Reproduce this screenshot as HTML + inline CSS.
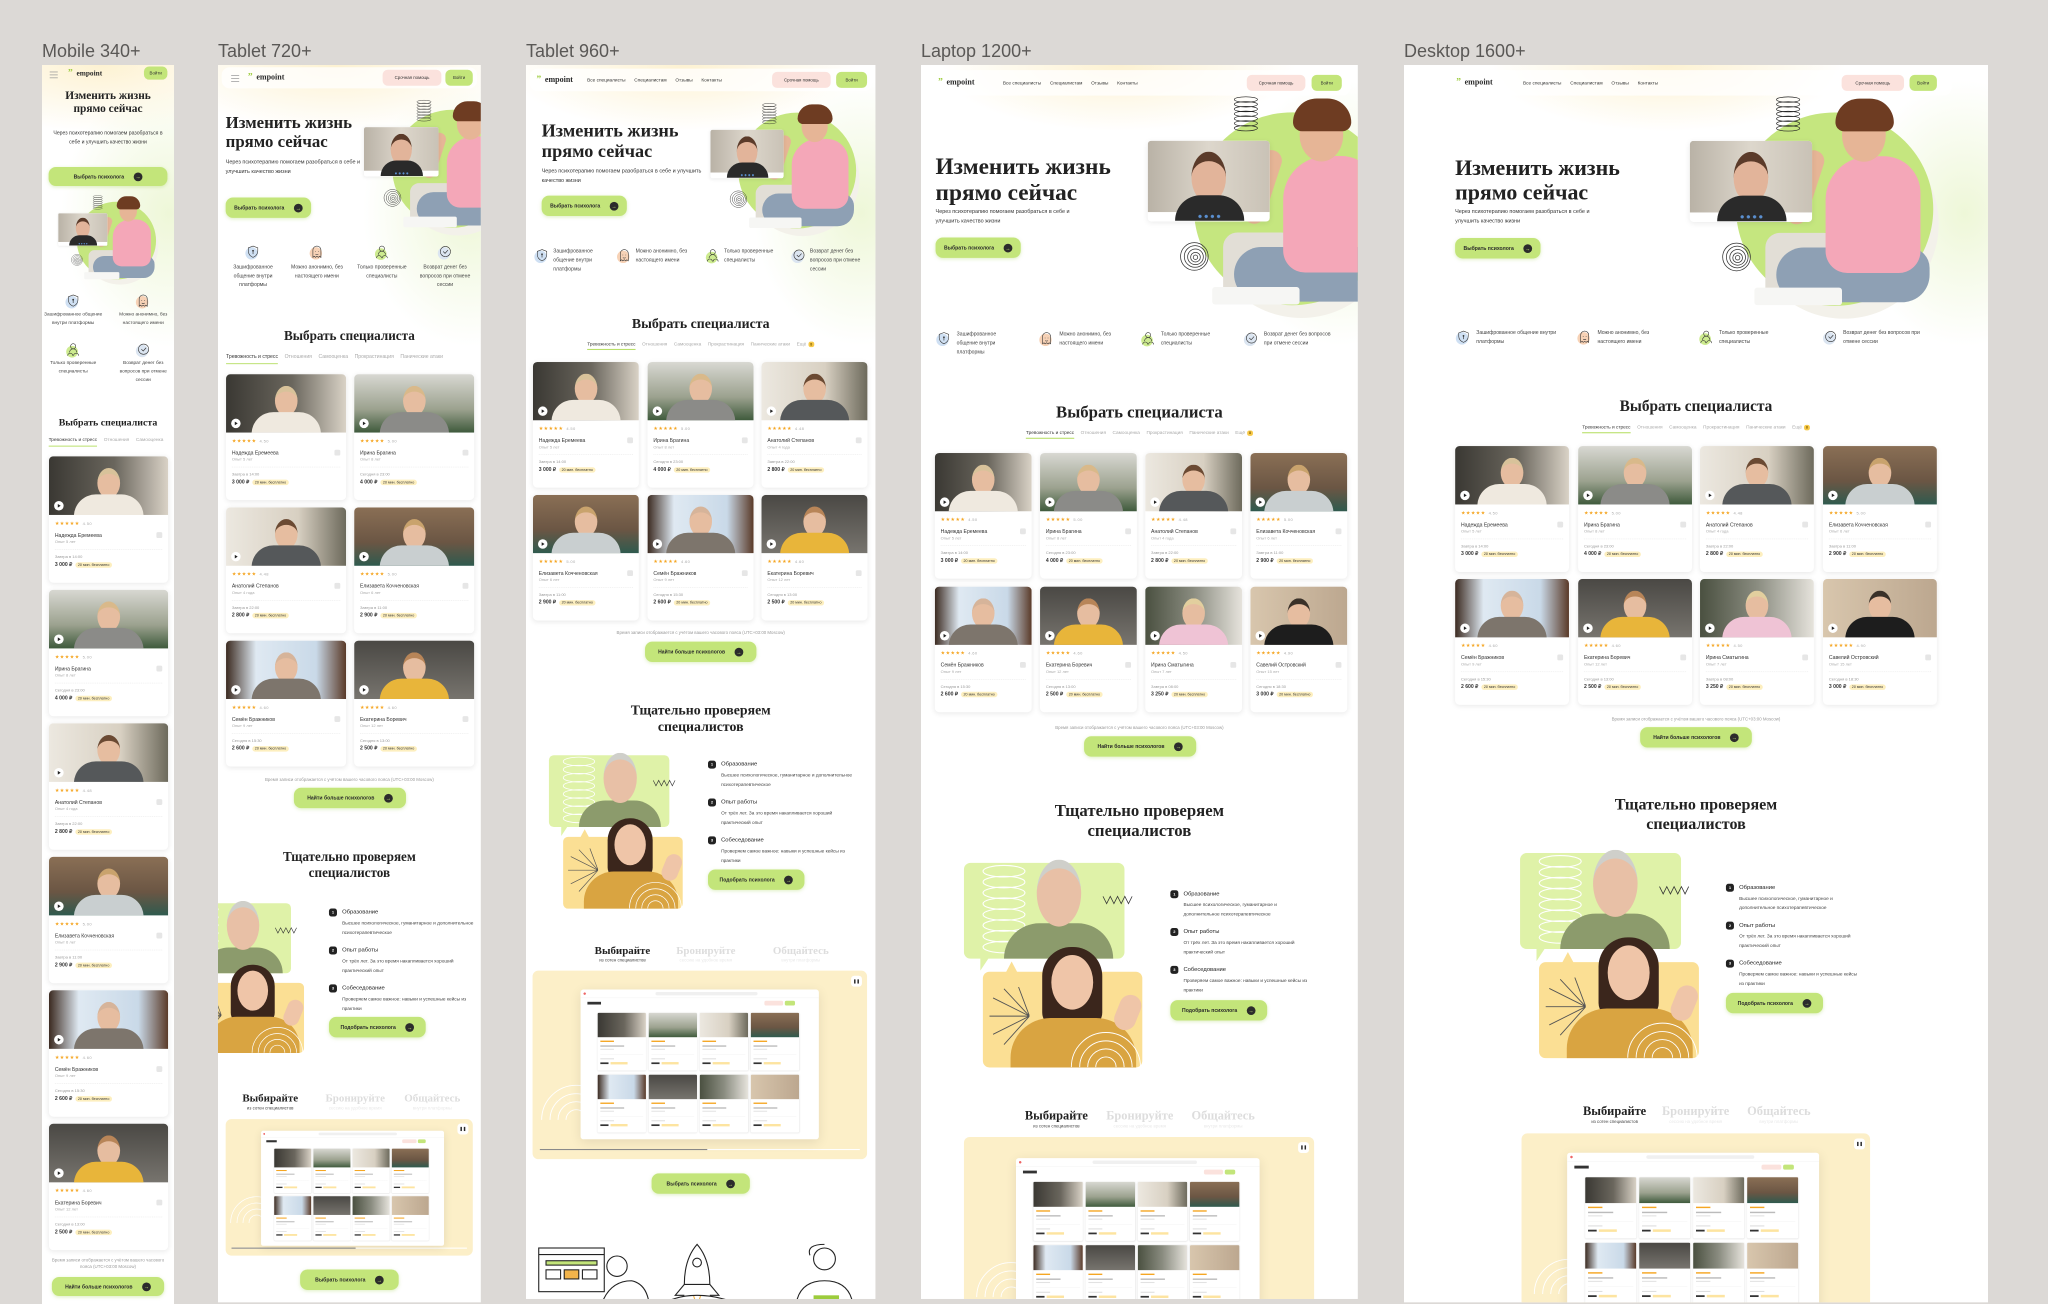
<!DOCTYPE html>
<html style="height:1304px;overflow:hidden"><head><meta charset="utf-8"><style>
html,body{margin:0;width:2048px;height:1304px;overflow:hidden}
body{background:#dcd9d6;font-family:"Liberation Sans",sans-serif}
#w{position:absolute;left:0;top:0;width:2048px;height:1304px;overflow:hidden;contain:paint;background:#dcd9d6}
.lbl{position:absolute;top:41px;font-size:18px;color:#5a5856}
.ab{position:absolute;top:65px;height:3390px;background:radial-gradient(ellipse 700px 260px at 45% 0,#fdf2d2,rgba(255,255,255,0) 70%),radial-gradient(ellipse 420px 520px at 96% 12%,#eef7d8,rgba(255,255,255,0) 70%),#fff;transform-origin:0 0;overflow:hidden;color:#2a2a2a}
.ab>*,.art>*,.il>*,.mb>*,.box>*{position:absolute}
.nav{background:rgba(255,255,255,.75);border-radius:22px}
.logo{font-family:"Liberation Serif",serif;font-weight:bold;font-size:22px;white-space:nowrap}
.logo b{color:#9ccc3c;font-size:26px;margin-right:10px}
.lk{font-size:13px;color:#333;white-space:nowrap}.lk span{margin-left:24px}
.bp,.bgn{height:44px;line-height:44px;text-align:center;font-size:12px;border-radius:14px;color:#333}
.bp{background:#fbe2dd}.bgn{background:#c3e57a}
.hb{width:22px;height:14px;border-top:2px solid #999;border-bottom:2px solid #999}.hb:after{content:"";position:absolute;left:0;right:0;top:6px;border-top:2px solid #999}
.h1{font-family:"Liberation Serif",serif;font-weight:bold;line-height:1.12;color:#222;white-space:nowrap}
.sub{font-size:15px;line-height:1.75;color:#333}
.gb{height:56px;line-height:56px;border-radius:20px;background:#c3e57a;font-size:14px;font-weight:bold;color:#2a2a2a;text-align:center;box-shadow:0 3px 10px rgba(160,210,80,.35);white-space:nowrap}
.gb i{display:inline-block;width:24px;height:24px;line-height:24px;border-radius:50%;background:#2c2c2c;color:#c3e57a;font-style:normal;font-size:14px;margin-left:26px;vertical-align:middle}
.ft{font-size:14px;line-height:1.75;color:#444}
.ic{width:46px;height:46px}
.st2{font-family:"Liberation Serif",serif;font-weight:bold;text-align:center;left:0;right:0;color:#222;line-height:1.2}
.tabs{display:flex;gap:18px;font-size:13px;color:#aaa;white-space:nowrap;justify-content:center;left:0;right:0}
.tabs span:first-child{color:#333;border-bottom:3px solid #b9e06a;padding-bottom:7px}
.tabs b{display:inline-block;background:#f7c948;color:#7a5a00;border-radius:6px;font-size:10px;padding:2px 5px;margin-left:6px}
.cd{background:#fff;border-radius:12px;box-shadow:0 3px 14px rgba(0,0,0,.09);overflow:hidden;height:345px}
.im{position:relative;height:160px;overflow:hidden;background:var(--bg)}
.im .h{position:absolute;left:50%;top:20%;width:62px;height:66px;margin-left:-31px;border-radius:50%;background:#e6bda0;border-top:16px solid var(--hr)}
.im .b{position:absolute;left:50%;bottom:-22px;width:190px;margin-left:-95px;height:78px;border-radius:60px 60px 0 0;background:var(--sh)}
.im s{position:absolute;left:14px;bottom:12px;width:26px;height:26px;border-radius:50%;background:#fff}
.im s:after{content:"";position:absolute;left:10px;top:8px;border-left:8px solid #222;border-top:5px solid transparent;border-bottom:5px solid transparent}
.tx{padding:14px 16px;font-size:13px;color:#333}
.tx p{margin:0}
.st{color:#f5a623;font-size:14px;letter-spacing:1px}.st em{color:#aaa;font-style:normal;font-size:11px;margin-left:8px}
.nm{margin-top:16px!important;font-size:14px;white-space:nowrap}.nm u{float:right;width:16px;height:16px;background:#e6e6e6;border-radius:4px}
.ex{font-size:11px;color:#aaa;margin-top:5px!important;padding-bottom:14px;border-bottom:1px dashed #ddd}
.tm{margin-top:14px!important;font-size:11px;color:#999}
.pr{margin-top:5px!important;font-weight:bold;font-size:14px;white-space:nowrap}.pr span{font-weight:normal;font-size:10px;background:#fdefbf;border-radius:8px;padding:2px 7px;margin-left:8px}
.q1{--bg:linear-gradient(90deg,#3a3833,#6a665d 55%,#d9d2c6);--sh:#efe9df;--hr:#d8c29a}
.q2{--bg:linear-gradient(#d8d8d2,#9ca28f 60%,#3f5a3c);--sh:#8b8b88;--hr:#d9b98a}
.q3{--bg:linear-gradient(90deg,#ece8e0,#d8d0c2 60%,#6d6a5c);--sh:#55585a;--hr:#6b4a33}
.q4{--bg:linear-gradient(#8a6f55,#6b5644 60%,#2f5a4e);--sh:#c9cfd0;--hr:#c9a36d}
.q5{--bg:linear-gradient(90deg,#3b2a20,#dfe9f2 25%,#c9d9e8 75%,#5a3a28);--sh:#7d756c;--hr:#d6b49a}
.q6{--bg:linear-gradient(#4a4844,#77746e);--sh:#e8b53a;--hr:#b88558}
.q7{--bg:linear-gradient(90deg,#4a5040,#8a8c80 50%,#e6e3dc);--sh:#efc3d5;--hr:#e2cf9e}
.q8{--bg:linear-gradient(90deg,#d8c6ad,#bca78f);--sh:#1d1d1d;--hr:#3a3129}
.note{left:0;right:0;text-align:center;font-size:12px;color:#999}
.stp{font-size:13px;color:#444;line-height:26px}
.stp p{margin:0 0 22px;padding-left:36px;position:relative}
.stp strong{font-size:16px;font-weight:normal;color:#222;display:block;margin-bottom:4px}
.stp .n{position:absolute;left:0;top:3px;width:22px;height:22px;line-height:22px;border-radius:7px;background:#222;color:#fff;font-size:11px;text-align:center}
.th{text-align:center;white-space:nowrap}
.th b{display:block;font-family:"Liberation Serif",serif;font-size:34px;color:#222}
.th span{font-size:12px;color:#444}
.th.g b{color:#ddd}.th.g span{color:#e8e8e8}
.box{background:#fcefc8;border-radius:16px;overflow:hidden}
.pz{width:30px;height:30px;border-radius:9px;background:#fff;font-size:11px;text-align:center;line-height:30px;font-weight:bold}
.mb{width:700px;height:440px;background:#fff;border-radius:8px;box-shadow:0 8px 34px rgba(0,0,0,.09);transform-origin:0 0;overflow:hidden}
.mc{width:142px;height:170px;background:#fff;box-shadow:0 1px 5px rgba(0,0,0,.12);border-radius:4px;overflow:hidden}
.mc i{display:block;height:72px;background:var(--bg)}
.mc:after{content:"";position:absolute;left:8px;right:8px;top:82px;height:80px;background:linear-gradient(#f5a623,#f5a623) 0 0/40px 4px no-repeat,linear-gradient(#bbb,#bbb) 0 14px/70px 4px no-repeat,linear-gradient(#e2e2e2,#e2e2e2) 0 24px/40px 3px no-repeat,linear-gradient(#eee,#eee) 0 40px/100% 1px no-repeat,linear-gradient(#ddd,#ddd) 0 52px/40px 3px no-repeat,linear-gradient(#333,#333) 0 64px/24px 5px no-repeat,linear-gradient(#fde4a0,#fde4a0) 30px 63px/50px 7px no-repeat}
.art,.il{width:700px;height:640px;transform-origin:0 0}
</style></head><body>
<svg width="0" height="0" style="position:absolute">
<symbol id="shield" viewBox="0 0 46 46"><circle cx="19" cy="27" r="17" fill="#cfe0f3"/><path d="M23 7l13 5v9c0 9-6 14-13 17-7-3-13-8-13-17v-9z" fill="none" stroke="#333" stroke-width="1.6"/><circle cx="23" cy="20" r="2.4" fill="#333"/><path d="M23 22v7" stroke="#333" stroke-width="1.8"/></symbol>
<symbol id="ghost" viewBox="0 0 46 46"><circle cx="20" cy="27" r="17" fill="#f7d2b6"/><path d="M12 38V18a11 11 0 0122 0v20l-4-3-3 3-4-3-4 3-3-3z" fill="none" stroke="#333" stroke-width="1.6"/><path d="M18 22h2M26 22h2M19 29q4 3 8 0" stroke="#333" stroke-width="1.6" fill="none"/></symbol>
<symbol id="ppl" viewBox="0 0 46 46"><circle cx="20" cy="29" r="16" fill="#cdeb8f"/><circle cx="23" cy="14" r="7" fill="none" stroke="#333" stroke-width="1.6"/><path d="M13 31a10 10 0 0120 0M8 40a7 7 0 0114 0M24 40a7 7 0 0114 0" fill="none" stroke="#333" stroke-width="1.6"/></symbol>
<symbol id="chk" viewBox="0 0 46 46"><circle cx="20" cy="27" r="17" fill="#dbe5f1"/><circle cx="24" cy="22" r="14" fill="none" stroke="#333" stroke-width="1.6"/><path d="M18 22l5 5 8-9" fill="none" stroke="#333" stroke-width="1.8"/></symbol>
<symbol id="spring" viewBox="0 0 80 110"><g fill="none" stroke="#222" stroke-width="2"><ellipse cx="40" cy="10" rx="34" ry="8"/><ellipse cx="40" cy="24" rx="34" ry="8"/><ellipse cx="40" cy="38" rx="34" ry="8"/><ellipse cx="40" cy="52" rx="34" ry="8"/><ellipse cx="40" cy="66" rx="34" ry="8"/><ellipse cx="40" cy="80" rx="34" ry="8"/><ellipse cx="40" cy="94" rx="34" ry="8"/></g></symbol>
<symbol id="wspring" viewBox="0 0 130 260"><g fill="none" stroke="#fff" stroke-width="3"><ellipse cx="65" cy="20" rx="58" ry="16"/><ellipse cx="65" cy="50" rx="58" ry="16"/><ellipse cx="65" cy="80" rx="58" ry="16"/><ellipse cx="65" cy="110" rx="58" ry="16"/><ellipse cx="65" cy="140" rx="58" ry="16"/><ellipse cx="65" cy="170" rx="58" ry="16"/><ellipse cx="65" cy="200" rx="58" ry="16"/><ellipse cx="65" cy="230" rx="58" ry="16"/></g></symbol>
<symbol id="spiral" viewBox="0 0 80 80"><g fill="none" stroke="#333" stroke-width="2"><circle cx="40" cy="40" r="37"/><circle cx="42" cy="40" r="29"/><circle cx="43" cy="41" r="21"/><circle cx="43" cy="42" r="13"/><circle cx="43" cy="42" r="6"/></g></symbol>
<symbol id="sq" viewBox="0 0 90 30"><path d="M2 6l10 20 10-20 10 20 10-20 10 20 10-20 10 20 10-20" fill="none" stroke="#333" stroke-width="2.2"/></symbol>
<symbol id="sun" viewBox="0 0 110 160"><g stroke="#555" stroke-width="2.5"><path d="M110 80H0M110 80L10 30M110 80L40 5M110 80L80 0M110 80L10 130M110 80L40 158"/></g></symbol>
<symbol id="arcs" viewBox="0 0 200 110"><g fill="none" stroke="#fff" stroke-width="2.5"><circle cx="100" cy="110" r="95"/><circle cx="100" cy="110" r="72"/><circle cx="100" cy="110" r="50"/><circle cx="100" cy="110" r="28"/></g></symbol>
</svg>
<div id="w">
<div class="lbl" style="left:42px">Mobile 340+</div>
<div class="lbl" style="left:218px">Tablet 720+</div>
<div class="lbl" style="left:526px">Tablet 960+</div>
<div class="lbl" style="left:921px">Laptop 1200+</div>
<div class="lbl" style="left:1404px">Desktop 1600+</div>

<!-- ================= DESKTOP ================= -->
<div class="ab" style="left:1404px;width:1600px;transform:scale(.365)">
<div class="nav" style="left:100px;top:14px;width:1400px;height:70px"></div>
<div class="logo" style="left:143px;top:30px"><b>”</b>empoint</div>
<div class="lk" style="left:326px;top:41px">Все специалисты<span>Специалистам</span><span>Отзывы</span><span>Контакты</span></div>
<div class="bp" style="left:1199px;top:27px;width:171px">Срочная помощь</div>
<div class="bgn" style="left:1385px;top:27px;width:75px">Войти</div>
<div class="h1" style="left:140px;top:248px;font-size:60px">Изменить жизнь<br>прямо сейчас</div>
<div class="sub" style="left:140px;top:388px;width:400px">Через психотерапию помогаем разобраться в себе и улучшить качество жизни</div>
<div class="gb" style="left:140px;top:474px;width:234px">Выбрать психолога<i>→</i></div>
<div class="art" style="left:770px;top:80px">
 <i style="left:175px;top:95px;width:520px;height:520px;border-radius:50%;background:#f3f1ea"></i>
 <i style="left:140px;top:50px;width:540px;height:530px;border-radius:50%;background:#c5e67f"></i>
 <i style="left:220px;top:380px;width:200px;height:190px;border-radius:40px;background:#e2ded6"></i>
 <i style="left:250px;top:420px;width:420px;height:150px;border-radius:80px 60px 80px 80px;background:#8ea0b4"></i>
 <i style="left:385px;top:170px;width:260px;height:320px;border-radius:120px 100px 60px 60px;background:#f4a7b8"></i>
 <i style="left:300px;top:150px;width:58px;height:210px;border-radius:30px;background:#e6b596;transform:rotate(18deg)"></i>
 <i style="left:430px;top:40px;width:120px;height:145px;border-radius:50%;background:#e6b596"></i>
 <i style="left:412px;top:12px;width:160px;height:90px;border-radius:80px 80px 30px 30px;background:#6e3c22"></i>
 <i style="left:190px;top:530px;width:240px;height:48px;border-radius:8px;background:#f6f6f4"></i>
 <div style="left:13px;top:128px;width:335px;height:222px;background:#fff;border-radius:10px;overflow:hidden;box-shadow:0 4px 16px rgba(0,0,0,.08)"><div style="position:absolute;left:0;top:0;right:0;height:196px;background:linear-gradient(90deg,#b9b2a6,#ddd7cc 50%,#c9c2b6)"><i style="position:absolute;left:120px;top:30px;width:95px;height:115px;border-radius:50%;background:#e2b49a;border-top:26px solid #5b3b2a"></i><i style="position:absolute;left:75px;top:150px;width:190px;height:70px;border-radius:70px 70px 0 0;background:#2a2a2a"></i></div><div style="position:absolute;left:135px;top:203px;width:70px;height:10px;background:radial-gradient(circle,#5a8fd0 4px,transparent 5px) 0 0/17px 10px"></div></div>
 <svg style="left:245px;top:2px" width="75" height="110"><use href="#spring"/></svg>
 <svg style="left:100px;top:405px" width="82" height="82"><use href="#spiral"/></svg>
</div>
<svg class="ic" style="left:140px;top:722px"><use href="#shield"/></svg><div class="ft" style="left:198px;top:720px;width:230px">Зашифрованное общение внутри платформы</div>
<svg class="ic" style="left:472px;top:722px"><use href="#ghost"/></svg><div class="ft" style="left:530px;top:720px;width:200px">Можно анонимно, без настоящего имени</div>
<svg class="ic" style="left:805px;top:722px"><use href="#ppl"/></svg><div class="ft" style="left:863px;top:720px;width:200px">Только проверенные специалисты</div>
<svg class="ic" style="left:1145px;top:722px"><use href="#chk"/></svg><div class="ft" style="left:1203px;top:720px;width:230px">Возврат денег без вопросов при отмене сессии</div>
<div class="st2" style="top:910px;font-size:42px">Выбрать специалиста</div>
<div class="tabs" style="top:984px"><span>Тревожность и стресс</span><span>Отношения</span><span>Самооценка</span><span>Прокрастинация</span><span>Панические атаки</span><span>Ещё<b>8</b></span></div>
<div class="cd q1" style="left:140px;top:1044px;width:312px"><div class="im"><i class="h"></i><i class="b"></i><s></s></div><div class="tx"><p class="st">★★★★★<em>4.50</em></p><p class="nm">Надежда Еремеева<u></u></p><p class="ex">Опыт 5 лет</p><p class="tm">Завтра в 14:00</p><p class="pr">3 000 ₽<span>20 мин. бесплатно</span></p></div></div>
<div class="cd q2" style="left:477px;top:1044px;width:312px"><div class="im"><i class="h"></i><i class="b"></i><s></s></div><div class="tx"><p class="st">★★★★★<em>5.00</em></p><p class="nm">Ирина Брагина<u></u></p><p class="ex">Опыт 8 лет</p><p class="tm">Сегодня в 23:00</p><p class="pr">4 000 ₽<span>20 мин. бесплатно</span></p></div></div>
<div class="cd q3" style="left:811px;top:1044px;width:312px"><div class="im"><i class="h"></i><i class="b"></i><s></s></div><div class="tx"><p class="st">★★★★★<em>4.48</em></p><p class="nm">Анатолий Степанов<u></u></p><p class="ex">Опыт 4 года</p><p class="tm">Завтра в 22:00</p><p class="pr">2 800 ₽<span>20 мин. бесплатно</span></p></div></div>
<div class="cd q4" style="left:1148px;top:1044px;width:312px"><div class="im"><i class="h"></i><i class="b"></i><s></s></div><div class="tx"><p class="st">★★★★★<em>5.00</em></p><p class="nm">Елизавета Кочченовская<u></u></p><p class="ex">Опыт 6 лет</p><p class="tm">Завтра в 11:00</p><p class="pr">2 900 ₽<span>20 мин. бесплатно</span></p></div></div>
<div class="cd q5" style="left:140px;top:1408px;width:312px"><div class="im"><i class="h"></i><i class="b"></i><s></s></div><div class="tx"><p class="st">★★★★★<em>4.60</em></p><p class="nm">Семён Бражников<u></u></p><p class="ex">Опыт 9 лет</p><p class="tm">Сегодня в 15:30</p><p class="pr">2 600 ₽<span>20 мин. бесплатно</span></p></div></div>
<div class="cd q6" style="left:477px;top:1408px;width:312px"><div class="im"><i class="h"></i><i class="b"></i><s></s></div><div class="tx"><p class="st">★★★★★<em>4.60</em></p><p class="nm">Екатерина Боревич<u></u></p><p class="ex">Опыт 12 лет</p><p class="tm">Сегодня в 13:00</p><p class="pr">2 500 ₽<span>20 мин. бесплатно</span></p></div></div>
<div class="cd q7" style="left:811px;top:1408px;width:312px"><div class="im"><i class="h"></i><i class="b"></i><s></s></div><div class="tx"><p class="st">★★★★★<em>4.50</em></p><p class="nm">Ирина Сматыгина<u></u></p><p class="ex">Опыт 7 лет</p><p class="tm">Завтра в 08:00</p><p class="pr">3 250 ₽<span>20 мин. бесплатно</span></p></div></div>
<div class="cd q8" style="left:1148px;top:1408px;width:312px"><div class="im"><i class="h"></i><i class="b"></i><s></s></div><div class="tx"><p class="st">★★★★★<em>4.90</em></p><p class="nm">Савелий Островский<u></u></p><p class="ex">Опыт 15 лет</p><p class="tm">Сегодня в 18:30</p><p class="pr">3 000 ₽<span>20 мин. бесплатно</span></p></div></div>
<div class="note" style="top:1785px">Время записи отображается с учётом вашего часового пояса (UTC+03:00 Moscow)</div>
<div class="gb" style="left:647px;top:1814px;width:306px">Найти больше психологов<i>→</i></div>
<div class="st2" style="top:2000px;font-size:44px">Тщательно проверяем<br>специалистов</div>
<div class="il" style="left:318px;top:2120px">
 <i style="left:0;top:39px;width:441px;height:263px;background:#dff2a8;border-radius:18px"></i>
 <i style="left:45px;top:290px;width:0;height:0;border-top:45px solid #dff2a8;border-right:30px solid transparent"></i>
 <svg style="left:45px;top:42px" width="130" height="258"><use href="#wspring"/></svg>
 <i style="left:52px;top:338px;width:438px;height:263px;background:#fbdf94;border-radius:18px"></i>
 <i style="left:115px;top:310px;width:0;height:0;border-bottom:30px solid #fbdf94;border-left:16px solid transparent;border-right:16px solid transparent"></i>
 <svg style="left:70px;top:380px" width="110" height="160"><use href="#sun"/></svg>
 <i style="left:110px;top:205px;width:300px;height:97px;border-radius:100px 100px 0 0;background:#8c9b6c"></i>
 <i style="left:200px;top:30px;width:122px;height:160px;border-radius:50%;background:#e8c0a6;border-top:24px solid #cfcfca"></i>
 <svg style="left:380px;top:125px" width="90" height="30"><use href="#sq"/></svg>
 <i style="left:215px;top:270px;width:165px;height:220px;border-radius:80px 80px 40px 40px;background:#3b261c"></i>
 <i style="left:128px;top:465px;width:345px;height:136px;border-radius:110px 110px 0 0;background:#d9a441"></i>
 <i style="left:240px;top:292px;width:115px;height:150px;border-radius:50%;background:#efc5a8"></i>
 <i style="left:420px;top:400px;width:60px;height:100px;border-radius:30px;background:#efc5a8;transform:rotate(22deg)"></i>
 <svg style="left:290px;top:490px" width="200" height="110"><use href="#arcs"/></svg>
</div>
<div class="stp" style="left:882px;top:2240px;width:360px"><p><b class="n">1</b><strong>Образование</strong>Высшее психологическое, гуманитарное и дополнительное психотерапевтическое</p><p><b class="n">2</b><strong>Опыт работы</strong>От трёх лет. За это время накапливается хороший практический опыт</p><p><b class="n">3</b><strong>Собеседование</strong>Проверяем самое важное: навыки и успешные кейсы из практики</p></div>
<div class="gb" style="left:882px;top:2542px;width:266px">Подобрать психолога<i>→</i></div>
<div class="th" style="left:477px;top:2848px;width:200px"><b>Выбирайте</b><span>из сотен специалистов</span></div>
<div class="th g" style="left:699px;top:2848px;width:200px"><b>Бронируйте</b><span>сессию на удобное время</span></div>
<div class="th g" style="left:927px;top:2848px;width:200px"><b>Общайтесь</b><span>внутри платформы</span></div>
<div class="box" style="left:322px;top:2927px;width:955px;height:700px"><div class="pz" style="right:14px;top:14px">❚❚</div><svg style="left:30px;top:330px" width="200" height="110"><use href="#arcs"/></svg></div>
<div class="mb" style="left:447px;top:2980px;transform:scale(.986)"><i style="left:0;right:0;top:0;height:24px;border-bottom:1px solid #eee;background:radial-gradient(circle,#e66 3px,transparent 4px) 6px 6px/12px 12px no-repeat"></i><i style="left:220px;top:7px;width:300px;height:10px;background:#f0f0f0;border-radius:5px"></i><i style="left:20px;top:36px;width:40px;height:8px;background:#333"></i><i style="left:600px;top:33px;width:30px;height:14px;background:#c3e57a;border-radius:5px"></i><i style="left:540px;top:33px;width:55px;height:14px;background:#fbe2dd;border-radius:5px"></i>
<div class="mc q1" style="left:50px;top:68px"><i></i></div><div class="mc q2" style="left:200px;top:68px"><i></i></div><div class="mc q3" style="left:350px;top:68px"><i></i></div><div class="mc q4" style="left:500px;top:68px"><i></i></div><div class="mc q5" style="left:50px;top:250px"><i></i></div><div class="mc q6" style="left:200px;top:250px"><i></i></div><div class="mc q7" style="left:350px;top:250px"><i></i></div><div class="mc q8" style="left:500px;top:250px"><i></i></div></div>
</div>

<!-- ================= LAPTOP ================= -->
<div class="ab" style="left:921px;width:1200px;transform:scale(.364)">
<div class="nav" style="left:20px;top:14px;width:1160px;height:70px"></div>
<div class="logo" style="left:47px;top:30px"><b>”</b>empoint</div>
<div class="lk" style="left:225px;top:41px">Все специалисты<span>Специалистам</span><span>Отзывы</span><span>Контакты</span></div>
<div class="bp" style="left:895px;top:27px;width:161px">Срочная помощь</div>
<div class="bgn" style="left:1073px;top:27px;width:83px">Войти</div>
<div class="h1" style="left:40px;top:242px;font-size:64px">Изменить жизнь<br>прямо сейчас</div>
<div class="sub" style="left:40px;top:390px;width:400px">Через психотерапию помогаем разобраться в себе и улучшить качество жизни</div>
<div class="gb" style="left:40px;top:474px;width:234px">Выбрать психолога<i>→</i></div>
<div class="art" style="left:610px;top:80px">
 <i style="left:175px;top:95px;width:520px;height:520px;border-radius:50%;background:#f3f1ea"></i>
 <i style="left:140px;top:50px;width:540px;height:530px;border-radius:50%;background:#c5e67f"></i>
 <i style="left:220px;top:380px;width:200px;height:190px;border-radius:40px;background:#e2ded6"></i>
 <i style="left:250px;top:420px;width:420px;height:150px;border-radius:80px 60px 80px 80px;background:#8ea0b4"></i>
 <i style="left:385px;top:170px;width:260px;height:320px;border-radius:120px 100px 60px 60px;background:#f4a7b8"></i>
 <i style="left:300px;top:150px;width:58px;height:210px;border-radius:30px;background:#e6b596;transform:rotate(18deg)"></i>
 <i style="left:430px;top:40px;width:120px;height:145px;border-radius:50%;background:#e6b596"></i>
 <i style="left:412px;top:12px;width:160px;height:90px;border-radius:80px 80px 30px 30px;background:#6e3c22"></i>
 <i style="left:190px;top:530px;width:240px;height:48px;border-radius:8px;background:#f6f6f4"></i>
 <div style="left:13px;top:128px;width:335px;height:222px;background:#fff;border-radius:10px;overflow:hidden;box-shadow:0 4px 16px rgba(0,0,0,.08)"><div style="position:absolute;left:0;top:0;right:0;height:196px;background:linear-gradient(90deg,#b9b2a6,#ddd7cc 50%,#c9c2b6)"><i style="position:absolute;left:120px;top:30px;width:95px;height:115px;border-radius:50%;background:#e2b49a;border-top:26px solid #5b3b2a"></i><i style="position:absolute;left:75px;top:150px;width:190px;height:70px;border-radius:70px 70px 0 0;background:#2a2a2a"></i></div><div style="position:absolute;left:135px;top:203px;width:70px;height:10px;background:radial-gradient(circle,#5a8fd0 4px,transparent 5px) 0 0/17px 10px"></div></div>
 <svg style="left:245px;top:2px" width="75" height="110"><use href="#spring"/></svg>
 <svg style="left:100px;top:405px" width="82" height="82"><use href="#spiral"/></svg>
</div>
<svg class="ic" style="left:40px;top:728px"><use href="#shield"/></svg><div class="ft" style="left:98px;top:726px;width:170px">Зашифрованное общение внутри платформы</div>
<svg class="ic" style="left:322px;top:728px"><use href="#ghost"/></svg><div class="ft" style="left:380px;top:726px;width:190px">Можно анонимно, без настоящего имени</div>
<svg class="ic" style="left:601px;top:728px"><use href="#ppl"/></svg><div class="ft" style="left:659px;top:726px;width:190px">Только проверенные специалисты</div>
<svg class="ic" style="left:884px;top:728px"><use href="#chk"/></svg><div class="ft" style="left:942px;top:726px;width:190px">Возврат денег без вопросов при отмене сессии</div>
<div class="st2" style="top:925px;font-size:46px">Выбрать специалиста</div>
<div class="tabs" style="top:1002px"><span>Тревожность и стресс</span><span>Отношения</span><span>Самооценка</span><span>Прокрастинация</span><span>Панические атаки</span><span>Ещё<b>8</b></span></div>
<div class="cd q1" style="left:38px;top:1066px;width:266px"><div class="im"><i class="h"></i><i class="b"></i><s></s></div><div class="tx"><p class="st">★★★★★<em>4.50</em></p><p class="nm">Надежда Еремеева<u></u></p><p class="ex">Опыт 5 лет</p><p class="tm">Завтра в 14:00</p><p class="pr">3 000 ₽<span>20 мин. бесплатно</span></p></div></div>
<div class="cd q2" style="left:327px;top:1066px;width:266px"><div class="im"><i class="h"></i><i class="b"></i><s></s></div><div class="tx"><p class="st">★★★★★<em>5.00</em></p><p class="nm">Ирина Брагина<u></u></p><p class="ex">Опыт 8 лет</p><p class="tm">Сегодня в 23:00</p><p class="pr">4 000 ₽<span>20 мин. бесплатно</span></p></div></div>
<div class="cd q3" style="left:616px;top:1066px;width:266px"><div class="im"><i class="h"></i><i class="b"></i><s></s></div><div class="tx"><p class="st">★★★★★<em>4.48</em></p><p class="nm">Анатолий Степанов<u></u></p><p class="ex">Опыт 4 года</p><p class="tm">Завтра в 22:00</p><p class="pr">2 800 ₽<span>20 мин. бесплатно</span></p></div></div>
<div class="cd q4" style="left:905px;top:1066px;width:266px"><div class="im"><i class="h"></i><i class="b"></i><s></s></div><div class="tx"><p class="st">★★★★★<em>5.00</em></p><p class="nm">Елизавета Кочченовская<u></u></p><p class="ex">Опыт 6 лет</p><p class="tm">Завтра в 11:00</p><p class="pr">2 900 ₽<span>20 мин. бесплатно</span></p></div></div>
<div class="cd q5" style="left:38px;top:1433px;width:266px"><div class="im"><i class="h"></i><i class="b"></i><s></s></div><div class="tx"><p class="st">★★★★★<em>4.60</em></p><p class="nm">Семён Бражников<u></u></p><p class="ex">Опыт 9 лет</p><p class="tm">Сегодня в 15:30</p><p class="pr">2 600 ₽<span>20 мин. бесплатно</span></p></div></div>
<div class="cd q6" style="left:327px;top:1433px;width:266px"><div class="im"><i class="h"></i><i class="b"></i><s></s></div><div class="tx"><p class="st">★★★★★<em>4.60</em></p><p class="nm">Екатерина Боревич<u></u></p><p class="ex">Опыт 12 лет</p><p class="tm">Сегодня в 13:00</p><p class="pr">2 500 ₽<span>20 мин. бесплатно</span></p></div></div>
<div class="cd q7" style="left:616px;top:1433px;width:266px"><div class="im"><i class="h"></i><i class="b"></i><s></s></div><div class="tx"><p class="st">★★★★★<em>4.50</em></p><p class="nm">Ирина Сматыгина<u></u></p><p class="ex">Опыт 7 лет</p><p class="tm">Завтра в 08:00</p><p class="pr">3 250 ₽<span>20 мин. бесплатно</span></p></div></div>
<div class="cd q8" style="left:905px;top:1433px;width:266px"><div class="im"><i class="h"></i><i class="b"></i><s></s></div><div class="tx"><p class="st">★★★★★<em>4.90</em></p><p class="nm">Савелий Островский<u></u></p><p class="ex">Опыт 15 лет</p><p class="tm">Сегодня в 18:30</p><p class="pr">3 000 ₽<span>20 мин. бесплатно</span></p></div></div>
<div class="note" style="top:1813px">Время записи отображается с учётом вашего часового пояса (UTC+03:00 Moscow)</div>
<div class="gb" style="left:448px;top:1844px;width:308px">Найти больше психологов<i>→</i></div>
<div class="st2" style="top:2020px;font-size:46px">Тщательно проверяем<br>специалистов</div>
<div class="il" style="left:118px;top:2153px">
 <i style="left:0;top:39px;width:441px;height:263px;background:#dff2a8;border-radius:18px"></i>
 <i style="left:45px;top:290px;width:0;height:0;border-top:45px solid #dff2a8;border-right:30px solid transparent"></i>
 <svg style="left:45px;top:42px" width="130" height="258"><use href="#wspring"/></svg>
 <i style="left:52px;top:338px;width:438px;height:263px;background:#fbdf94;border-radius:18px"></i>
 <i style="left:115px;top:310px;width:0;height:0;border-bottom:30px solid #fbdf94;border-left:16px solid transparent;border-right:16px solid transparent"></i>
 <svg style="left:70px;top:380px" width="110" height="160"><use href="#sun"/></svg>
 <i style="left:110px;top:205px;width:300px;height:97px;border-radius:100px 100px 0 0;background:#8c9b6c"></i>
 <i style="left:200px;top:30px;width:122px;height:160px;border-radius:50%;background:#e8c0a6;border-top:24px solid #cfcfca"></i>
 <svg style="left:380px;top:125px" width="90" height="30"><use href="#sq"/></svg>
 <i style="left:215px;top:270px;width:165px;height:220px;border-radius:80px 80px 40px 40px;background:#3b261c"></i>
 <i style="left:128px;top:465px;width:345px;height:136px;border-radius:110px 110px 0 0;background:#d9a441"></i>
 <i style="left:240px;top:292px;width:115px;height:150px;border-radius:50%;background:#efc5a8"></i>
 <i style="left:420px;top:400px;width:60px;height:100px;border-radius:30px;background:#efc5a8;transform:rotate(22deg)"></i>
 <svg style="left:290px;top:490px" width="200" height="110"><use href="#arcs"/></svg>
</div>
<div class="stp" style="left:685px;top:2264px;width:380px"><p><b class="n">1</b><strong>Образование</strong>Высшее психологическое, гуманитарное и дополнительное психотерапевтическое</p><p><b class="n">2</b><strong>Опыт работы</strong>От трёх лет. За это время накапливается хороший практический опыт</p><p><b class="n">3</b><strong>Собеседование</strong>Проверяем самое важное: навыки и успешные кейсы из практики</p></div>
<div class="gb" style="left:685px;top:2569px;width:266px">Подобрать психолога<i>→</i></div>
<div class="th" style="left:272px;top:2868px;width:200px"><b>Выбирайте</b><span>из сотен специалистов</span></div>
<div class="th g" style="left:501px;top:2868px;width:200px"><b>Бронируйте</b><span>сессию на удобное время</span></div>
<div class="th g" style="left:730px;top:2868px;width:200px"><b>Общайтесь</b><span>внутри платформы</span></div>
<div class="box" style="left:118px;top:2945px;width:962px;height:700px"><div class="pz" style="right:14px;top:14px">❚❚</div><svg style="left:30px;top:330px" width="200" height="110"><use href="#arcs"/></svg></div>
<div class="mb" style="left:261px;top:3003px;transform:scale(.956)"><i style="left:0;right:0;top:0;height:24px;border-bottom:1px solid #eee;background:radial-gradient(circle,#e66 3px,transparent 4px) 6px 6px/12px 12px no-repeat"></i><i style="left:220px;top:7px;width:300px;height:10px;background:#f0f0f0;border-radius:5px"></i><i style="left:20px;top:36px;width:40px;height:8px;background:#333"></i><i style="left:600px;top:33px;width:30px;height:14px;background:#c3e57a;border-radius:5px"></i><i style="left:540px;top:33px;width:55px;height:14px;background:#fbe2dd;border-radius:5px"></i>
<div class="mc q1" style="left:50px;top:68px"><i></i></div><div class="mc q2" style="left:200px;top:68px"><i></i></div><div class="mc q3" style="left:350px;top:68px"><i></i></div><div class="mc q4" style="left:500px;top:68px"><i></i></div><div class="mc q5" style="left:50px;top:250px"><i></i></div><div class="mc q6" style="left:200px;top:250px"><i></i></div><div class="mc q7" style="left:350px;top:250px"><i></i></div><div class="mc q8" style="left:500px;top:250px"><i></i></div></div>
</div>

<!-- ================= TABLET 960 ================= -->
<div class="ab" style="left:526px;width:960px;transform:scale(.364)">
<div class="nav" style="left:10px;top:10px;width:940px;height:62px"></div>
<div class="logo" style="left:29px;top:24px"><b>”</b>empoint</div>
<div class="lk" style="left:168px;top:34px">Все специалисты<span>Специалистам</span><span>Отзывы</span><span>Контакты</span></div>
<div class="bp" style="left:676px;top:19px;width:161px">Срочная помощь</div>
<div class="bgn" style="left:852px;top:19px;width:85px">Войти</div>
<div class="h1" style="left:43px;top:152px;font-size:50px">Изменить жизнь<br>прямо сейчас</div>
<div class="sub" style="left:43px;top:278px;width:440px">Через психотерапию помогаем разобраться в себе и улучшить качество жизни</div>
<div class="gb" style="left:43px;top:359px;width:234px">Выбрать психолога<i>→</i></div>
<div class="art" style="left:499px;top:101px;transform:scale(.6)">
 <i style="left:175px;top:95px;width:520px;height:520px;border-radius:50%;background:#f3f1ea"></i>
 <i style="left:140px;top:50px;width:540px;height:530px;border-radius:50%;background:#c5e67f"></i>
 <i style="left:220px;top:380px;width:200px;height:190px;border-radius:40px;background:#e2ded6"></i>
 <i style="left:250px;top:420px;width:420px;height:150px;border-radius:80px 60px 80px 80px;background:#8ea0b4"></i>
 <i style="left:385px;top:170px;width:260px;height:320px;border-radius:120px 100px 60px 60px;background:#f4a7b8"></i>
 <i style="left:300px;top:150px;width:58px;height:210px;border-radius:30px;background:#e6b596;transform:rotate(18deg)"></i>
 <i style="left:430px;top:40px;width:120px;height:145px;border-radius:50%;background:#e6b596"></i>
 <i style="left:412px;top:12px;width:160px;height:90px;border-radius:80px 80px 30px 30px;background:#6e3c22"></i>
 <i style="left:190px;top:530px;width:240px;height:48px;border-radius:8px;background:#f6f6f4"></i>
 <div style="left:13px;top:128px;width:335px;height:222px;background:#fff;border-radius:10px;overflow:hidden;box-shadow:0 4px 16px rgba(0,0,0,.08)"><div style="position:absolute;left:0;top:0;right:0;height:196px;background:linear-gradient(90deg,#b9b2a6,#ddd7cc 50%,#c9c2b6)"><i style="position:absolute;left:120px;top:30px;width:95px;height:115px;border-radius:50%;background:#e2b49a;border-top:26px solid #5b3b2a"></i><i style="position:absolute;left:75px;top:150px;width:190px;height:70px;border-radius:70px 70px 0 0;background:#2a2a2a"></i></div><div style="position:absolute;left:135px;top:203px;width:70px;height:10px;background:radial-gradient(circle,#5a8fd0 4px,transparent 5px) 0 0/17px 10px"></div></div>
 <svg style="left:245px;top:2px" width="75" height="110"><use href="#spring"/></svg>
 <svg style="left:100px;top:405px" width="82" height="82"><use href="#spiral"/></svg>
</div>
<svg class="ic" style="left:21px;top:500px"><use href="#shield"/></svg><div class="ft" style="left:75px;top:498px;width:150px">Зашифрованное общение внутри платформы</div>
<svg class="ic" style="left:247px;top:500px"><use href="#ghost"/></svg><div class="ft" style="left:301px;top:498px;width:160px">Можно анонимно, без настоящего имени</div>
<svg class="ic" style="left:490px;top:500px"><use href="#ppl"/></svg><div class="ft" style="left:544px;top:498px;width:150px">Только проверенные специалисты</div>
<svg class="ic" style="left:726px;top:500px"><use href="#chk"/></svg><div class="ft" style="left:780px;top:498px;width:170px">Возврат денег без вопросов при отмене сессии</div>
<div class="st2" style="top:688px;font-size:38px">Выбрать специалиста</div>
<div class="tabs" style="top:758px"><span>Тревожность и стресс</span><span>Отношения</span><span>Самооценка</span><span>Прокрастинация</span><span>Панические атаки</span><span>Ещё<b>8</b></span></div>
<div class="cd q1" style="left:19px;top:816px;width:291px"><div class="im"><i class="h"></i><i class="b"></i><s></s></div><div class="tx"><p class="st">★★★★★<em>4.50</em></p><p class="nm">Надежда Еремеева<u></u></p><p class="ex">Опыт 5 лет</p><p class="tm">Завтра в 14:00</p><p class="pr">3 000 ₽<span>20 мин. бесплатно</span></p></div></div>
<div class="cd q2" style="left:334px;top:816px;width:291px"><div class="im"><i class="h"></i><i class="b"></i><s></s></div><div class="tx"><p class="st">★★★★★<em>5.00</em></p><p class="nm">Ирина Брагина<u></u></p><p class="ex">Опыт 8 лет</p><p class="tm">Сегодня в 23:00</p><p class="pr">4 000 ₽<span>20 мин. бесплатно</span></p></div></div>
<div class="cd q3" style="left:647px;top:816px;width:291px"><div class="im"><i class="h"></i><i class="b"></i><s></s></div><div class="tx"><p class="st">★★★★★<em>4.48</em></p><p class="nm">Анатолий Степанов<u></u></p><p class="ex">Опыт 4 года</p><p class="tm">Завтра в 22:00</p><p class="pr">2 800 ₽<span>20 мин. бесплатно</span></p></div></div>
<div class="cd q4" style="left:19px;top:1181px;width:291px"><div class="im"><i class="h"></i><i class="b"></i><s></s></div><div class="tx"><p class="st">★★★★★<em>5.00</em></p><p class="nm">Елизавета Кочченовская<u></u></p><p class="ex">Опыт 6 лет</p><p class="tm">Завтра в 11:00</p><p class="pr">2 900 ₽<span>20 мин. бесплатно</span></p></div></div>
<div class="cd q5" style="left:334px;top:1181px;width:291px"><div class="im"><i class="h"></i><i class="b"></i><s></s></div><div class="tx"><p class="st">★★★★★<em>4.60</em></p><p class="nm">Семён Бражников<u></u></p><p class="ex">Опыт 9 лет</p><p class="tm">Сегодня в 15:30</p><p class="pr">2 600 ₽<span>20 мин. бесплатно</span></p></div></div>
<div class="cd q6" style="left:647px;top:1181px;width:291px"><div class="im"><i class="h"></i><i class="b"></i><s></s></div><div class="tx"><p class="st">★★★★★<em>4.60</em></p><p class="nm">Екатерина Боревич<u></u></p><p class="ex">Опыт 12 лет</p><p class="tm">Сегодня в 13:00</p><p class="pr">2 500 ₽<span>20 мин. бесплатно</span></p></div></div>
<div class="note" style="top:1552px">Время записи отображается с учётом вашего часового пояса (UTC+03:00 Moscow)</div>
<div class="gb" style="left:327px;top:1584px;width:306px">Найти больше психологов<i>→</i></div>
<div class="st2" style="top:1750px;font-size:38px">Тщательно проверяем<br>специалистов</div>
<div class="il" style="left:63px;top:1867px;transform:scale(.75)">
 <i style="left:0;top:39px;width:441px;height:263px;background:#dff2a8;border-radius:18px"></i>
 <i style="left:45px;top:290px;width:0;height:0;border-top:45px solid #dff2a8;border-right:30px solid transparent"></i>
 <svg style="left:45px;top:42px" width="130" height="258"><use href="#wspring"/></svg>
 <i style="left:52px;top:338px;width:438px;height:263px;background:#fbdf94;border-radius:18px"></i>
 <i style="left:115px;top:310px;width:0;height:0;border-bottom:30px solid #fbdf94;border-left:16px solid transparent;border-right:16px solid transparent"></i>
 <svg style="left:70px;top:380px" width="110" height="160"><use href="#sun"/></svg>
 <i style="left:110px;top:205px;width:300px;height:97px;border-radius:100px 100px 0 0;background:#8c9b6c"></i>
 <i style="left:200px;top:30px;width:122px;height:160px;border-radius:50%;background:#e8c0a6;border-top:24px solid #cfcfca"></i>
 <svg style="left:380px;top:125px" width="90" height="30"><use href="#sq"/></svg>
 <i style="left:215px;top:270px;width:165px;height:220px;border-radius:80px 80px 40px 40px;background:#3b261c"></i>
 <i style="left:128px;top:465px;width:345px;height:136px;border-radius:110px 110px 0 0;background:#d9a441"></i>
 <i style="left:240px;top:292px;width:115px;height:150px;border-radius:50%;background:#efc5a8"></i>
 <i style="left:420px;top:400px;width:60px;height:100px;border-radius:30px;background:#efc5a8;transform:rotate(22deg)"></i>
 <svg style="left:290px;top:490px" width="200" height="110"><use href="#arcs"/></svg>
</div>
<div class="stp" style="left:500px;top:1908px;width:400px"><p><b class="n">1</b><strong>Образование</strong>Высшее психологическое, гуманитарное и дополнительное психотерапевтическое</p><p><b class="n">2</b><strong>Опыт работы</strong>От трёх лет. За это время накапливается хороший практический опыт</p><p><b class="n">3</b><strong>Собеседование</strong>Проверяем самое важное: навыки и успешные кейсы из практики</p></div>
<div class="gb" style="left:500px;top:2210px;width:265px">Подобрать психолога<i>→</i></div>
<div class="th" style="left:165px;top:2416px;width:200px"><b style="font-size:30px">Выбирайте</b><span>из сотен специалистов</span></div>
<div class="th g" style="left:394px;top:2416px;width:200px"><b style="font-size:30px">Бронируйте</b><span>сессию на удобное время</span></div>
<div class="th g" style="left:655px;top:2416px;width:200px"><b style="font-size:30px">Общайтесь</b><span>внутри платформы</span></div>
<div class="box" style="left:18px;top:2488px;width:919px;height:518px"><div class="pz" style="right:14px;top:14px">❚❚</div><svg style="left:20px;top:300px" width="200" height="110"><use href="#arcs"/></svg><i style="left:20px;right:20px;top:490px;height:3px;background:#fff"></i><i style="left:20px;width:460px;top:490px;height:3px;background:#8a8a8a"></i></div>
<div class="mb" style="left:150px;top:2540px;transform:scale(.935)"><i style="left:0;right:0;top:0;height:24px;border-bottom:1px solid #eee;background:radial-gradient(circle,#e66 3px,transparent 4px) 6px 6px/12px 12px no-repeat"></i><i style="left:220px;top:7px;width:300px;height:10px;background:#f0f0f0;border-radius:5px"></i><i style="left:20px;top:36px;width:40px;height:8px;background:#333"></i><i style="left:600px;top:33px;width:30px;height:14px;background:#c3e57a;border-radius:5px"></i><i style="left:540px;top:33px;width:55px;height:14px;background:#fbe2dd;border-radius:5px"></i>
<div class="mc q1" style="left:50px;top:68px"><i></i></div><div class="mc q2" style="left:200px;top:68px"><i></i></div><div class="mc q3" style="left:350px;top:68px"><i></i></div><div class="mc q4" style="left:500px;top:68px"><i></i></div><div class="mc q5" style="left:50px;top:250px"><i></i></div><div class="mc q6" style="left:200px;top:250px"><i></i></div><div class="mc q7" style="left:350px;top:250px"><i></i></div><div class="mc q8" style="left:500px;top:250px"><i></i></div></div>
<div class="gb" style="left:345px;top:3045px;width:270px">Выбрать психолога<i>→</i></div>
<svg style="left:20px;top:3230px" width="920" height="200" viewBox="0 0 920 200"><g fill="none" stroke="#222" stroke-width="3"><rect x="15" y="20" width="180" height="120"/><line x1="15" y1="38" x2="195" y2="38"/><rect x="35" y="55" width="140" height="12" fill="#c3e57a"/><rect x="35" y="80" width="40" height="25"/><rect x="85" y="80" width="40" height="25" fill="#f2b44b"/><rect x="135" y="80" width="40" height="25"/><circle cx="230" cy="70" r="28"/><path d="M180 200q20-90 90-90 50 10 50 90M0 190h300"/><path d="M450 10q35 40 35 110h-70q0-70 35-110zM415 120l-25 30h25M485 120l25 30h-25"/><circle cx="450" cy="60" r="12"/><path d="M440 150q10 30 10 40 0-10 10-40" stroke="#f2b44b"/><path d="M330 190q50-40 120-40 70 0 150 40"/><circle cx="800" cy="50" r="30"/><path d="M720 200q0-90 80-90t80 90M700 190h220M760 40q-10-30 40-30"/></g><rect x="770" y="150" width="70" height="50" fill="#9ccc3c"/></svg>
</div>

<!-- ================= TABLET 720 ================= -->
<div class="ab" style="left:218px;width:720px;transform:scale(.365)">
<div class="nav" style="left:10px;top:6px;width:700px;height:58px"></div>
<div class="hb" style="left:36px;top:28px"></div>
<div class="logo" style="left:82px;top:17px"><b>”</b>empoint</div>
<div class="bp" style="left:451px;top:13px;width:161px">Срочная помощь</div>
<div class="bgn" style="left:623px;top:13px;width:75px">Войти</div>
<div class="h1" style="left:21px;top:132px;font-size:46px">Изменить жизнь<br>прямо сейчас</div>
<div class="sub" style="left:21px;top:253px;width:390px">Через психотерапию помогаем разобраться в себе и улучшить качество жизни</div>
<div class="gb" style="left:21px;top:363px;width:234px">Выбрать психолога<i>→</i></div>
<div class="art" style="left:392px;top:92px;transform:scale(.61)">
 <i style="left:175px;top:95px;width:520px;height:520px;border-radius:50%;background:#f3f1ea"></i>
 <i style="left:140px;top:50px;width:540px;height:530px;border-radius:50%;background:#c5e67f"></i>
 <i style="left:220px;top:380px;width:200px;height:190px;border-radius:40px;background:#e2ded6"></i>
 <i style="left:250px;top:420px;width:420px;height:150px;border-radius:80px 60px 80px 80px;background:#8ea0b4"></i>
 <i style="left:385px;top:170px;width:260px;height:320px;border-radius:120px 100px 60px 60px;background:#f4a7b8"></i>
 <i style="left:300px;top:150px;width:58px;height:210px;border-radius:30px;background:#e6b596;transform:rotate(18deg)"></i>
 <i style="left:430px;top:40px;width:120px;height:145px;border-radius:50%;background:#e6b596"></i>
 <i style="left:412px;top:12px;width:160px;height:90px;border-radius:80px 80px 30px 30px;background:#6e3c22"></i>
 <i style="left:190px;top:530px;width:240px;height:48px;border-radius:8px;background:#f6f6f4"></i>
 <div style="left:13px;top:128px;width:335px;height:222px;background:#fff;border-radius:10px;overflow:hidden;box-shadow:0 4px 16px rgba(0,0,0,.08)"><div style="position:absolute;left:0;top:0;right:0;height:196px;background:linear-gradient(90deg,#b9b2a6,#ddd7cc 50%,#c9c2b6)"><i style="position:absolute;left:120px;top:30px;width:95px;height:115px;border-radius:50%;background:#e2b49a;border-top:26px solid #5b3b2a"></i><i style="position:absolute;left:75px;top:150px;width:190px;height:70px;border-radius:70px 70px 0 0;background:#2a2a2a"></i></div><div style="position:absolute;left:135px;top:203px;width:70px;height:10px;background:radial-gradient(circle,#5a8fd0 4px,transparent 5px) 0 0/17px 10px"></div></div>
 <svg style="left:245px;top:2px" width="75" height="110"><use href="#spring"/></svg>
 <svg style="left:100px;top:405px" width="82" height="82"><use href="#spiral"/></svg>
</div>
<svg class="ic" style="left:73px;top:489px"><use href="#shield"/></svg><div class="ft" style="left:16px;top:540px;width:160px;text-align:center">Зашифрованное общение внутри платформы</div>
<svg class="ic" style="left:248px;top:489px"><use href="#ghost"/></svg><div class="ft" style="left:186px;top:540px;width:170px;text-align:center">Можно анонимно, без настоящего имени</div>
<svg class="ic" style="left:426px;top:489px"><use href="#ppl"/></svg><div class="ft" style="left:369px;top:540px;width:160px;text-align:center">Только проверенные специалисты</div>
<svg class="ic" style="left:599px;top:489px"><use href="#chk"/></svg><div class="ft" style="left:537px;top:540px;width:170px;text-align:center">Возврат денег без вопросов при отмене сессии</div>
<div class="st2" style="top:720px;font-size:36px">Выбрать специалиста</div>
<div class="tabs" style="top:790px;left:22px;justify-content:flex-start;font-size:14px;overflow:hidden;height:30px"><span>Тревожность и стресс</span><span>Отношения</span><span>Самооценка</span><span>Прокрастинация</span><span>Панические атаки</span></div>
<div class="cd q1" style="left:22px;top:847px;width:329px"><div class="im"><i class="h"></i><i class="b"></i><s></s></div><div class="tx"><p class="st">★★★★★<em>4.50</em></p><p class="nm">Надежда Еремеева<u></u></p><p class="ex">Опыт 5 лет</p><p class="tm">Завтра в 14:00</p><p class="pr">3 000 ₽<span>20 мин. бесплатно</span></p></div></div>
<div class="cd q2" style="left:373px;top:847px;width:329px"><div class="im"><i class="h"></i><i class="b"></i><s></s></div><div class="tx"><p class="st">★★★★★<em>5.00</em></p><p class="nm">Ирина Брагина<u></u></p><p class="ex">Опыт 8 лет</p><p class="tm">Сегодня в 23:00</p><p class="pr">4 000 ₽<span>20 мин. бесплатно</span></p></div></div>
<div class="cd q3" style="left:22px;top:1212px;width:329px"><div class="im"><i class="h"></i><i class="b"></i><s></s></div><div class="tx"><p class="st">★★★★★<em>4.48</em></p><p class="nm">Анатолий Степанов<u></u></p><p class="ex">Опыт 4 года</p><p class="tm">Завтра в 22:00</p><p class="pr">2 800 ₽<span>20 мин. бесплатно</span></p></div></div>
<div class="cd q4" style="left:373px;top:1212px;width:329px"><div class="im"><i class="h"></i><i class="b"></i><s></s></div><div class="tx"><p class="st">★★★★★<em>5.00</em></p><p class="nm">Елизавета Кочченовская<u></u></p><p class="ex">Опыт 6 лет</p><p class="tm">Завтра в 11:00</p><p class="pr">2 900 ₽<span>20 мин. бесплатно</span></p></div></div>
<div class="cd q5" style="left:22px;top:1577px;width:329px"><div class="im"><i class="h"></i><i class="b"></i><s></s></div><div class="tx"><p class="st">★★★★★<em>4.60</em></p><p class="nm">Семён Бражников<u></u></p><p class="ex">Опыт 9 лет</p><p class="tm">Сегодня в 15:30</p><p class="pr">2 600 ₽<span>20 мин. бесплатно</span></p></div></div>
<div class="cd q6" style="left:373px;top:1577px;width:329px"><div class="im"><i class="h"></i><i class="b"></i><s></s></div><div class="tx"><p class="st">★★★★★<em>4.60</em></p><p class="nm">Екатерина Боревич<u></u></p><p class="ex">Опыт 12 лет</p><p class="tm">Сегодня в 13:00</p><p class="pr">2 500 ₽<span>20 мин. бесплатно</span></p></div></div>
<div class="note" style="top:1950px">Время записи отображается с учётом вашего часового пояса (UTC+03:00 Moscow)</div>
<div class="gb" style="left:208px;top:1980px;width:307px">Найти больше психологов<i>→</i></div>
<div class="st2" style="top:2148px;font-size:36px">Тщательно проверяем<br>специалистов</div>
<div class="il" style="left:-122px;top:2268px;transform:scale(.73)">
 <i style="left:0;top:39px;width:441px;height:263px;background:#dff2a8;border-radius:18px"></i>
 <svg style="left:45px;top:42px" width="130" height="258"><use href="#wspring"/></svg>
 <i style="left:52px;top:338px;width:438px;height:263px;background:#fbdf94;border-radius:18px"></i>
 <svg style="left:70px;top:380px" width="110" height="160"><use href="#sun"/></svg>
 <i style="left:110px;top:205px;width:300px;height:97px;border-radius:100px 100px 0 0;background:#8c9b6c"></i>
 <i style="left:200px;top:30px;width:122px;height:160px;border-radius:50%;background:#e8c0a6;border-top:24px solid #cfcfca"></i>
 <svg style="left:380px;top:125px" width="90" height="30"><use href="#sq"/></svg>
 <i style="left:215px;top:270px;width:165px;height:220px;border-radius:80px 80px 40px 40px;background:#3b261c"></i>
 <i style="left:128px;top:465px;width:345px;height:136px;border-radius:110px 110px 0 0;background:#d9a441"></i>
 <i style="left:240px;top:292px;width:115px;height:150px;border-radius:50%;background:#efc5a8"></i>
 <i style="left:420px;top:400px;width:60px;height:100px;border-radius:30px;background:#efc5a8;transform:rotate(22deg)"></i>
 <svg style="left:290px;top:490px" width="200" height="110"><use href="#arcs"/></svg>
</div>
<div class="stp" style="left:304px;top:2308px;width:400px"><p><b class="n">1</b><strong>Образование</strong>Высшее психологическое, гуманитарное и дополнительное психотерапевтическое</p><p><b class="n">2</b><strong>Опыт работы</strong>От трёх лет. За это время накапливается хороший практический опыт</p><p><b class="n">3</b><strong>Собеседование</strong>Проверяем самое важное: навыки и успешные кейсы из практики</p></div>
<div class="gb" style="left:304px;top:2608px;width:265px">Подобрать психолога<i>→</i></div>
<div class="th" style="left:43px;top:2814px;width:200px"><b style="font-size:30px">Выбирайте</b><span>из сотен специалистов</span></div>
<div class="th g" style="left:276px;top:2814px;width:200px"><b style="font-size:30px">Бронируйте</b><span>сессию на удобное время</span></div>
<div class="th g" style="left:487px;top:2814px;width:200px"><b style="font-size:30px">Общайтесь</b><span>внутри платформы</span></div>
<div class="box" style="left:21px;top:2888px;width:677px;height:374px"><div class="pz" style="right:12px;top:12px">❚❚</div><svg style="left:10px;top:200px" width="150" height="85"><use href="#arcs"/></svg><i style="left:16px;right:16px;top:352px;height:3px;background:#fff"></i><i style="left:16px;width:340px;top:352px;height:3px;background:#8a8a8a"></i></div>
<div class="mb" style="left:118px;top:2920px;transform:scale(.716)"><i style="left:0;right:0;top:0;height:24px;border-bottom:1px solid #eee;background:radial-gradient(circle,#e66 3px,transparent 4px) 6px 6px/12px 12px no-repeat"></i><i style="left:220px;top:7px;width:300px;height:10px;background:#f0f0f0;border-radius:5px"></i><i style="left:20px;top:36px;width:40px;height:8px;background:#333"></i><i style="left:600px;top:33px;width:30px;height:14px;background:#c3e57a;border-radius:5px"></i><i style="left:540px;top:33px;width:55px;height:14px;background:#fbe2dd;border-radius:5px"></i>
<div class="mc q1" style="left:50px;top:68px"><i></i></div><div class="mc q2" style="left:200px;top:68px"><i></i></div><div class="mc q3" style="left:350px;top:68px"><i></i></div><div class="mc q4" style="left:500px;top:68px"><i></i></div><div class="mc q5" style="left:50px;top:250px"><i></i></div><div class="mc q6" style="left:200px;top:250px"><i></i></div><div class="mc q7" style="left:350px;top:250px"><i></i></div><div class="mc q8" style="left:500px;top:250px"><i></i></div></div>
<div class="gb" style="left:225px;top:3300px;width:270px">Выбрать психолога<i>→</i></div>
</div>

<!-- ================= MOBILE ================= -->
<div class="ab" style="left:42px;width:360px;transform:scale(.3667);height:3380px">
<div class="hb" style="left:21px;top:18px"></div>
<div class="logo" style="left:71px;top:5px;font-size:20px"><b>”</b>empoint</div>
<div class="bgn" style="left:278px;top:4px;width:64px;height:36px;line-height:36px">Войти</div>
<div class="h1" style="left:0;width:360px;text-align:center;top:66px;font-size:31px">Изменить жизнь<br>прямо сейчас</div>
<div class="sub" style="left:30px;top:172px;width:300px;text-align:center;font-size:14px">Через психотерапию помогаем разобраться в себе и улучшить качество жизни</div>
<div class="gb" style="left:18px;top:278px;width:324px;height:52px;line-height:52px">Выбрать психолога<i>→</i></div>
<div class="art" style="left:39px;top:353px;transform:scale(.4)">
 <i style="left:175px;top:95px;width:520px;height:520px;border-radius:50%;background:#f3f1ea"></i>
 <i style="left:140px;top:50px;width:540px;height:530px;border-radius:50%;background:#c5e67f"></i>
 <i style="left:220px;top:380px;width:200px;height:190px;border-radius:40px;background:#e2ded6"></i>
 <i style="left:250px;top:420px;width:420px;height:150px;border-radius:80px 60px 80px 80px;background:#8ea0b4"></i>
 <i style="left:385px;top:170px;width:260px;height:320px;border-radius:120px 100px 60px 60px;background:#f4a7b8"></i>
 <i style="left:300px;top:150px;width:58px;height:210px;border-radius:30px;background:#e6b596;transform:rotate(18deg)"></i>
 <i style="left:430px;top:40px;width:120px;height:145px;border-radius:50%;background:#e6b596"></i>
 <i style="left:412px;top:12px;width:160px;height:90px;border-radius:80px 80px 30px 30px;background:#6e3c22"></i>
 <i style="left:190px;top:530px;width:240px;height:48px;border-radius:8px;background:#f6f6f4"></i>
 <div style="left:13px;top:128px;width:335px;height:222px;background:#fff;border-radius:10px;overflow:hidden;box-shadow:0 4px 16px rgba(0,0,0,.08)"><div style="position:absolute;left:0;top:0;right:0;height:196px;background:linear-gradient(90deg,#b9b2a6,#ddd7cc 50%,#c9c2b6)"><i style="position:absolute;left:120px;top:30px;width:95px;height:115px;border-radius:50%;background:#e2b49a;border-top:26px solid #5b3b2a"></i><i style="position:absolute;left:75px;top:150px;width:190px;height:70px;border-radius:70px 70px 0 0;background:#2a2a2a"></i></div><div style="position:absolute;left:135px;top:203px;width:70px;height:10px;background:radial-gradient(circle,#5a8fd0 4px,transparent 5px) 0 0/17px 10px"></div></div>
 <svg style="left:245px;top:2px" width="75" height="110"><use href="#spring"/></svg>
 <svg style="left:100px;top:405px" width="82" height="82"><use href="#spiral"/></svg>
</div>
<svg class="ic" style="left:62px;top:620px"><use href="#shield"/></svg><div class="ft" style="left:5px;top:668px;width:160px;text-align:center;font-size:13px">Зашифрованное общение внутри платформы</div>
<svg class="ic" style="left:253px;top:620px"><use href="#ghost"/></svg><div class="ft" style="left:191px;top:668px;width:170px;text-align:center;font-size:13px">Можно анонимно, без настоящего имени</div>
<svg class="ic" style="left:62px;top:753px"><use href="#ppl"/></svg><div class="ft" style="left:5px;top:801px;width:160px;text-align:center;font-size:13px">Только проверенные специалисты</div>
<svg class="ic" style="left:253px;top:753px"><use href="#chk"/></svg><div class="ft" style="left:191px;top:801px;width:170px;text-align:center;font-size:13px">Возврат денег без вопросов при отмене сессии</div>
<div class="st2" style="top:958px;font-size:27px">Выбрать специалиста</div>
<div class="tabs" style="top:1013px;left:18px;justify-content:flex-start;font-size:13px;overflow:hidden;height:28px"><span>Тревожность и стресс</span><span>Отношения</span><span>Самооценка</span></div>
<div class="cd q1" style="left:19px;top:1067px;width:325px"><div class="im"><i class="h"></i><i class="b"></i><s></s></div><div class="tx"><p class="st">★★★★★<em>4.50</em></p><p class="nm">Надежда Еремеева<u></u></p><p class="ex">Опыт 5 лет</p><p class="tm">Завтра в 14:00</p><p class="pr">3 000 ₽<span>20 мин. бесплатно</span></p></div></div>
<div class="cd q2" style="left:19px;top:1431px;width:325px"><div class="im"><i class="h"></i><i class="b"></i><s></s></div><div class="tx"><p class="st">★★★★★<em>5.00</em></p><p class="nm">Ирина Брагина<u></u></p><p class="ex">Опыт 8 лет</p><p class="tm">Сегодня в 23:00</p><p class="pr">4 000 ₽<span>20 мин. бесплатно</span></p></div></div>
<div class="cd q3" style="left:19px;top:1795px;width:325px"><div class="im"><i class="h"></i><i class="b"></i><s></s></div><div class="tx"><p class="st">★★★★★<em>4.48</em></p><p class="nm">Анатолий Степанов<u></u></p><p class="ex">Опыт 4 года</p><p class="tm">Завтра в 22:00</p><p class="pr">2 800 ₽<span>20 мин. бесплатно</span></p></div></div>
<div class="cd q4" style="left:19px;top:2159px;width:325px"><div class="im"><i class="h"></i><i class="b"></i><s></s></div><div class="tx"><p class="st">★★★★★<em>5.00</em></p><p class="nm">Елизавета Кочченовская<u></u></p><p class="ex">Опыт 6 лет</p><p class="tm">Завтра в 11:00</p><p class="pr">2 900 ₽<span>20 мин. бесплатно</span></p></div></div>
<div class="cd q5" style="left:19px;top:2523px;width:325px"><div class="im"><i class="h"></i><i class="b"></i><s></s></div><div class="tx"><p class="st">★★★★★<em>4.60</em></p><p class="nm">Семён Бражников<u></u></p><p class="ex">Опыт 9 лет</p><p class="tm">Сегодня в 15:30</p><p class="pr">2 600 ₽<span>20 мин. бесплатно</span></p></div></div>
<div class="cd q6" style="left:19px;top:2887px;width:325px"><div class="im"><i class="h"></i><i class="b"></i><s></s></div><div class="tx"><p class="st">★★★★★<em>4.60</em></p><p class="nm">Екатерина Боревич<u></u></p><p class="ex">Опыт 12 лет</p><p class="tm">Сегодня в 13:00</p><p class="pr">2 500 ₽<span>20 мин. бесплатно</span></p></div></div>
<div class="note" style="top:3250px;left:20px;right:20px;line-height:1.5">Время записи отображается с учётом вашего часового пояса (UTC+03:00 Moscow)</div>
<div class="gb" style="left:27px;top:3305px;width:306px;height:52px;line-height:52px">Найти больше психологов<i>→</i></div>
</div>
</div>
</body></html>
